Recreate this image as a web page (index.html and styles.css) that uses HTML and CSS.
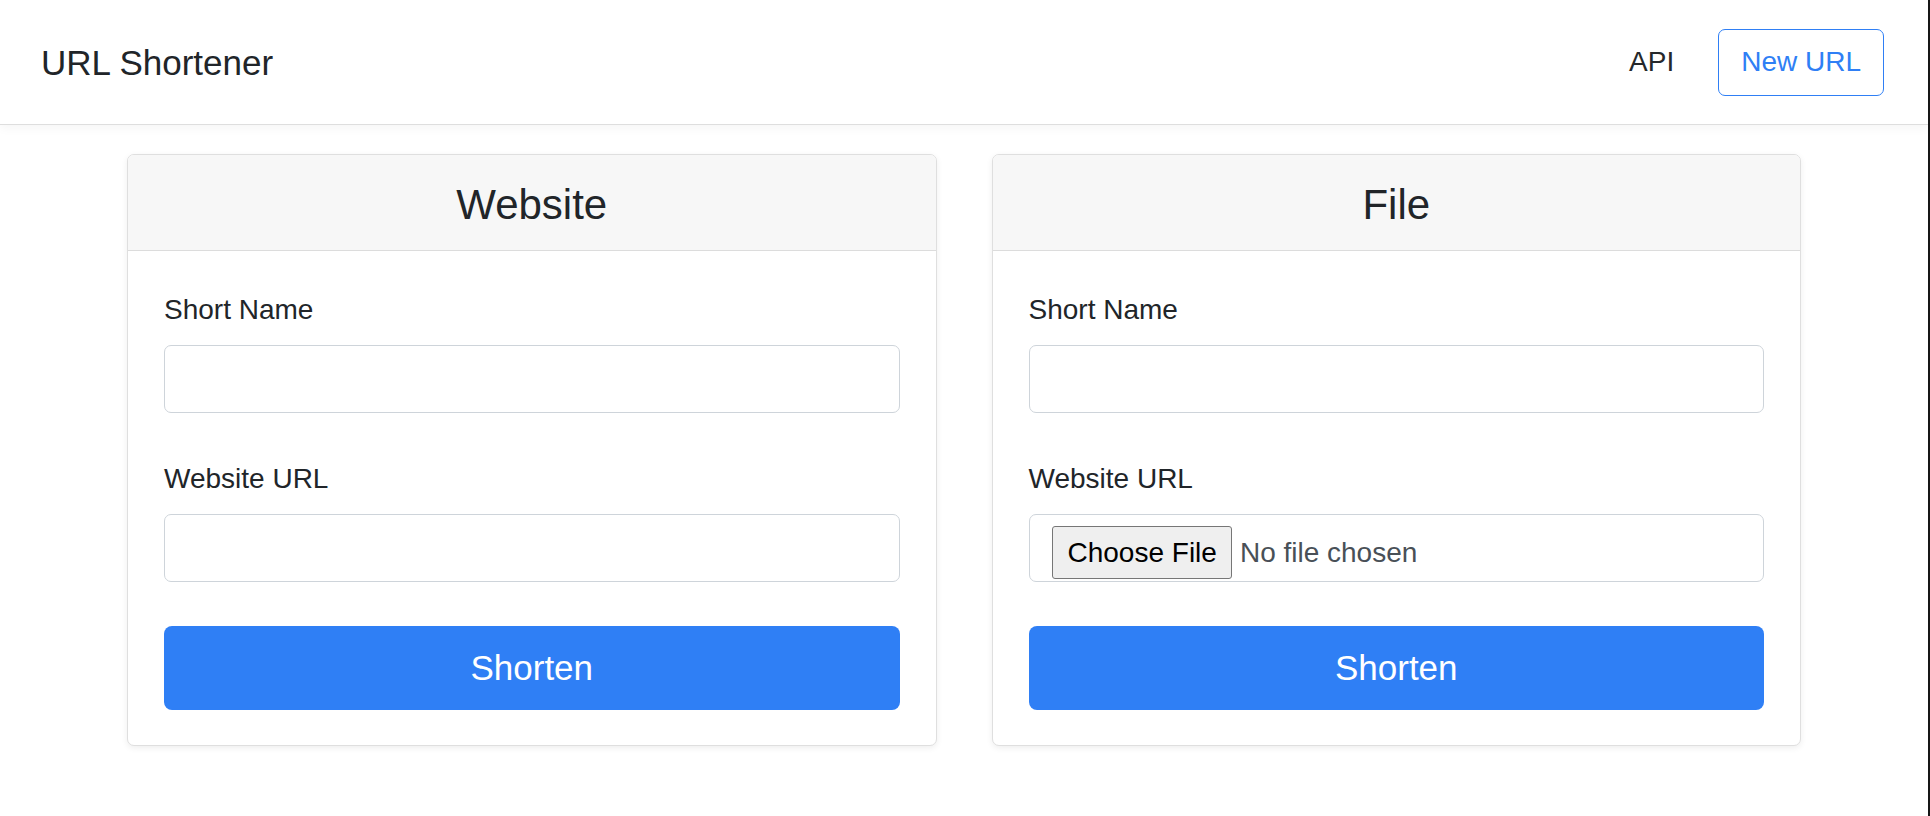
FILE: index.html
```html
<!DOCTYPE html>
<html lang="en">
<head>
<meta charset="utf-8">
<title>URL Shortener</title>
<link rel="stylesheet" href="styles.css">
</head>
<body>
<nav class="navbar">
  <a class="brand" href="#">URL Shortener</a>
  <div class="nav-right">
    <a class="nav-link" href="#">API</a>
    <a class="btn-outline" href="#">New URL</a>
  </div>
</nav>
<main class="cards">
  <section class="card">
    <h2 class="card-header">Website</h2>
    <form class="card-body">
      <div class="field field-first">
        <label class="label">Short Name</label>
        <input class="control" type="text">
      </div>
      <div class="field">
        <label class="label">Website URL</label>
        <input class="control" type="text">
      </div>
      <button class="btn-submit" type="button">Shorten</button>
    </form>
  </section>
  <section class="card">
    <h2 class="card-header">File</h2>
    <form class="card-body">
      <div class="field field-first">
        <label class="label">Short Name</label>
        <input class="control" type="text">
      </div>
      <div class="field">
        <label class="label">Website URL</label>
        <div class="control file-control">
          <span class="file-btn">Choose File</span>
          <span class="file-name">No file chosen</span>
        </div>
      </div>
      <button class="btn-submit" type="button">Shorten</button>
    </form>
  </section>
</main>
</body>
</html>
```
FILE: styles.css
```css
* { box-sizing: border-box; }
html, body { margin: 0; padding: 0; }
body {
  font-family: "Liberation Sans", Arial, Helvetica, sans-serif;
  color: #212529;
  background: #ffffff;
  min-height: 100vh;
  border-right: 2px solid #161616;
}
.navbar {
  display: flex;
  align-items: center;
  height: 125px;
  padding: 0 44px 0 41px;
  border-bottom: 1px solid #dedede;
  box-shadow: 0 3px 10px rgba(0, 0, 0, 0.045);
  background: #ffffff;
}
.brand {
  font-size: 35px;
  line-height: 1;
  color: #212529;
  text-decoration: none;
}
.nav-right {
  margin-left: auto;
  display: flex;
  align-items: center;
}
.nav-link {
  font-size: 28px;
  color: #25282b;
  text-decoration: none;
  margin-right: 44px;
}
.btn-outline {
  display: flex;
  align-items: center;
  height: 67px;
  padding: 0 22px;
  border: 1.5px solid #2f7ff5;
  border-radius: 7px;
  font-size: 28px;
  color: #2f7ff5;
  text-decoration: none;
}
.cards {
  display: grid;
  grid-template-columns: 1fr 1fr;
  column-gap: 55px;
  width: 1674px;
  margin: 0 auto;
  padding-top: 29px;
}
.card {
  border: 1px solid #dfdfdf;
  border-radius: 7px;
  overflow: hidden;
  box-shadow: 0 2px 6px rgba(0, 0, 0, 0.07);
  background: #ffffff;
}
.card-header {
  margin: 0;
  padding: 25px 0 20px;
  font-size: 42px;
  line-height: 50px;
  font-weight: 400;
  text-align: center;
  background: #f7f7f7;
  border-bottom: 1px solid #dcdcdc;
}
.card-body {
  margin: 0;
  padding: 38px 36px 35px;
}
.field { margin-bottom: 44px; }
.field-first { margin-bottom: 45px; }
.label {
  display: block;
  font-size: 28px;
  line-height: 42px;
  margin-bottom: 14px;
}
.control {
  display: block;
  width: 100%;
  height: 68px;
  padding: 0 22px;
  border: 1px solid #ced4da;
  border-radius: 7px;
  font-family: inherit;
  font-size: 28px;
  color: #495057;
  background: #ffffff;
}
.file-control {
  display: flex;
  align-items: flex-start;
  padding-top: 11px;
}
.file-btn {
  display: flex;
  align-items: center;
  height: 53px;
  padding: 0 14px 0 15px;
  border: 1px solid #767676;
  border-radius: 3px;
  background: #efefef;
  color: #000000;
  font-size: 28px;
}
.file-name {
  display: flex;
  align-items: center;
  height: 53px;
  margin-left: 8px;
  color: #495057;
  font-size: 28px;
}
.btn-submit {
  display: block;
  width: 100%;
  height: 84px;
  border: none;
  border-radius: 8px;
  background: #2f7ff5;
  color: #ffffff;
  font-family: inherit;
  font-size: 35px;
  cursor: pointer;
}
```
